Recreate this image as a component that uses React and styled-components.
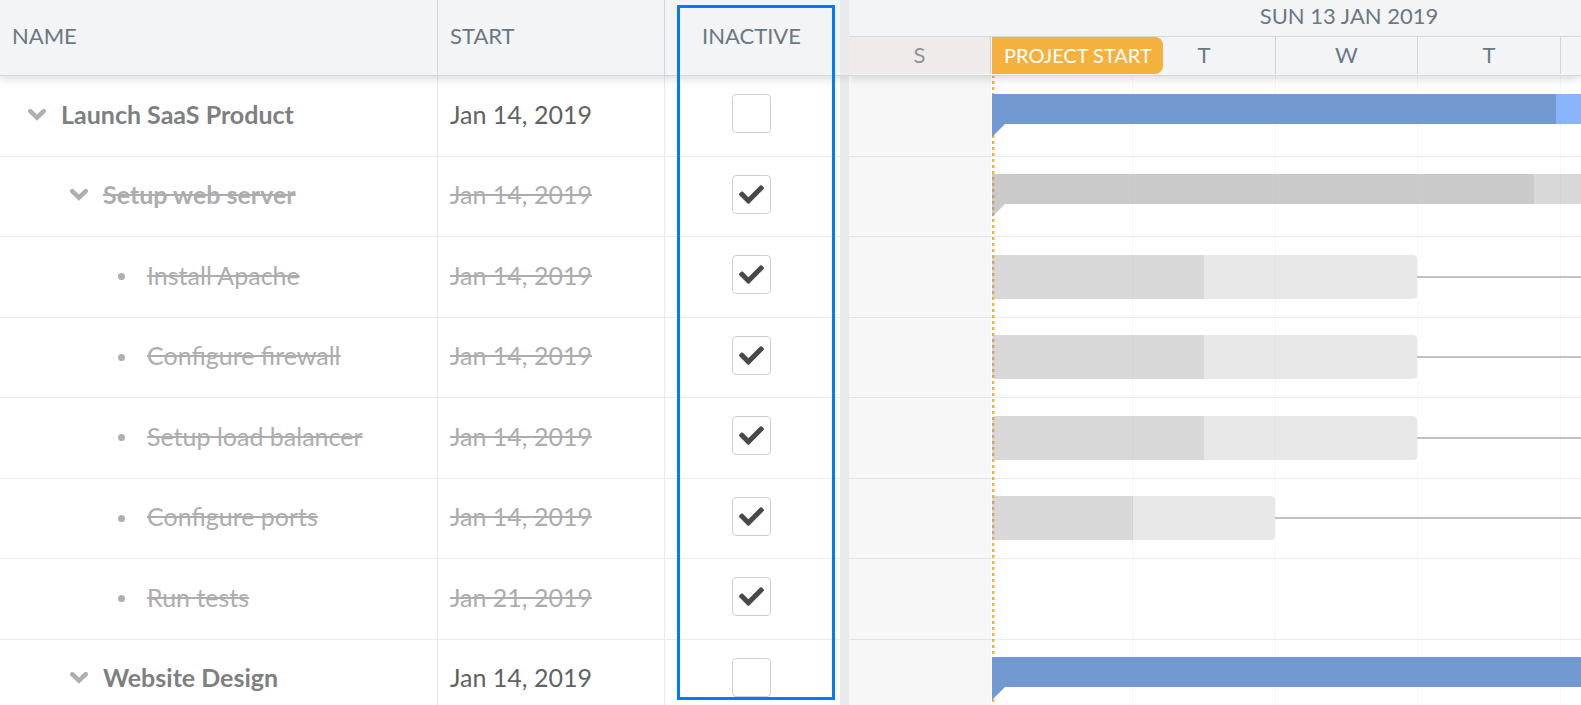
import React, { useState } from "react";
import styled, { createGlobalStyle, css } from "styled-components";
import { FaCheck } from "react-icons/fa";

const GlobalStyle = createGlobalStyle`
  *, *::before, *::after { box-sizing: border-box; }
  body {
    margin: 0;
    background: #fff;
    font-family: Lato, "Liberation Sans", sans-serif;
    font-size: 25px;
    line-height: 30px;
    color: #606263;
  }
`;

const HEADER_LINE = "#d5d8da";
const ROW_LINE = "#e9eaeb";

const Gantt = styled.main`
  display: flex;
  height: 100vh;
  overflow: hidden;
`;

const headerSurface = css`
  position: relative;
  z-index: 2;
  background: #f3f4f6;
  box-shadow: 0 2px 10px rgba(0, 0, 0, 0.16);
`;

const rowHeight = css`
  height: 81px;
  &:nth-child(even) { height: 80px; }
`;

const TreePanel = styled.section`
  position: relative;
  flex: none;
  overflow: hidden;
`;

const TreeTable = styled.table`
  table-layout: fixed;
  width: 840px;
  border-collapse: separate;
  border-spacing: 0;
`;

const NameColumn = styled.col`
  width: 438px;
`;

const StartColumn = styled.col`
  width: 227px;
`;

const HeadRow = styled.tr`
  ${headerSurface}
  height: 76px;
`;

const HeadCell = styled.th`
  padding: 0 12px 4px;
  border-right: 1px solid ${HEADER_LINE};
  border-bottom: 1px solid ${HEADER_LINE};
  color: #6b7883;
  font-size: 22px;
  font-weight: 400;
  text-align: ${(p) => (p.$center ? "center" : "left")};
  &:last-child { padding-right: 14px; border-right: 0; }
`;

const Row = styled.tr`
  ${rowHeight}
  color: ${(p) => (p.$inactive ? "#adadad" : "inherit")};
`;

const Cell = styled.td`
  padding: 0 12px 5px;
  border-right: 1px solid ${ROW_LINE};
  border-bottom: 1px solid ${ROW_LINE};
  text-decoration: ${(p) => (p.$struck ? "line-through" : "none")};
  &:last-child { padding-right: 14px; border-right: 0; }
`;

const TreeNode = styled.div`
  display: flex;
  align-items: center;
  gap: ${(p) => (p.$leaf ? 15 : 13)}px;
  padding-left: ${(p) => 14 + p.$depth * 42}px;
`;

const NodeName = styled.span`
  color: ${(p) => (p.$inactive ? "#adadad" : "#7d7f80")};
  font-weight: ${(p) => (p.$parent ? 700 : 400)};
  text-decoration: ${(p) => (p.$inactive ? "line-through" : "none")};
`;

const Expander = styled.button`
  display: flex;
  width: 22px;
  height: 22px;
  padding: 0;
  border: 0;
  background: none;
  color: #adafb0;
  cursor: pointer;
`;

const LeafMark = styled.span`
  display: flex;
  justify-content: center;
  width: 22px;
  padding-top: 4px;
  &::before {
    content: "";
    width: 7px;
    height: 7px;
    border-radius: 50%;
    background: #adafb0;
  }
`;

const Tick = styled.label`
  display: grid;
  width: 39px;
  margin: 0 auto;
  > * { grid-area: 1 / 1; place-self: center; }
  svg { z-index: 1; color: #464849; font-size: 25px; pointer-events: none; }
`;

const TickBox = styled.input`
  appearance: none;
  width: 39px;
  height: 39px;
  margin: 0;
  border: 1px solid #d0d1d2;
  border-radius: 4px;
  background: #fff;
`;

const ColumnHighlight = styled.div`
  position: absolute;
  z-index: 3;
  top: 5px;
  right: 5px;
  bottom: 5px;
  width: 158px;
  border: 3px solid #007bff;
  pointer-events: none;
`;

const Splitter = styled.div`
  flex: none;
  width: 9px;
  background: #e8eaec;
  &::before {
    content: "";
    display: block;
    height: 76px;
    border-bottom: 1px solid ${HEADER_LINE};
    box-shadow: 0 2px 10px rgba(0, 0, 0, 0.16);
  }
`;

const Timeline = styled.section`
  display: flex;
  flex-direction: column;
  flex: 1;
  min-width: 0;
  overflow: hidden;
`;

const TimeHeader = styled.header`
  ${headerSurface}
  flex: none;
  height: 76px;
  border-bottom: 1px solid ${HEADER_LINE};
  color: #6b7883;
  font-size: 22px;
`;

const WeekLabel = styled.div`
  width: 1000px;
  height: 37px;
  padding-top: 1px;
  border-bottom: 1px solid ${HEADER_LINE};
  text-align: center;
`;

const Days = styled.div`
  display: flex;
  height: 37px;
`;

const Day = styled.div`
  flex: none;
  width: ${(p) => p.$width}px;
  padding-top: 3px;
  border-right: 1px solid ${HEADER_LINE};
  background: ${(p) => (p.$weekend ? "#f0ebeb" : "none")};
  color: ${(p) => (p.$weekend ? "#909298" : "inherit")};
  text-align: center;
`;

const StartFlag = styled.div`
  position: absolute;
  top: 37px;
  left: 143px;
  height: 37px;
  padding: 3px 11px 0 12px;
  border-radius: 0 8px 8px 0;
  background: #f5b13d;
  color: #fff;
  font-size: 20px;
  white-space: nowrap;
`;

const TimeBody = styled.div`
  position: relative;
  flex: 1;
`;

const Backdrop = styled.div`
  position: absolute;
  inset: 0;
  display: flex;
`;

const DayStripe = styled.div`
  flex: none;
  width: ${(p) => p.$width}px;
  border-right: 1px solid #f7f7f8;
  background: ${(p) => (p.$weekend ? "#f7f7f7" : "none")};
`;

const StartLine = styled.div`
  position: absolute;
  top: 0;
  bottom: 0;
  left: 143px;
  width: 3px;
  background: repeating-linear-gradient(
    #f5b13d 0 2px, transparent 2px 5px, #f5b13d 5px 6px
  );
  mask-image: linear-gradient(90deg, #000 2px, rgba(0, 0, 0, 0.4) 2px);
`;

const Lanes = styled.div`
  position: relative;
`;

const Lane = styled.div`
  ${rowHeight}
  display: flex;
  align-items: flex-start;
  padding: 18px 0 0 143px;
  border-bottom: 1px solid rgba(0, 0, 0, 0.08);
  &:nth-child(even) { padding-top: 17px; }
`;

const summaryTones = {
  blue: ["#7299d2", "#89b4fa"],
  grey: ["rgba(150, 150, 150, 0.5)", "rgba(150, 150, 150, 0.37)"],
};

const SummaryBar = styled.div`
  flex: 1;
  height: 44px;
  background: ${(p) => {
    const [done, rest] = summaryTones[p.$tone];
    return `linear-gradient(90deg, ${done} ${p.$done}px, ${rest} ${p.$done}px)`;
  }};
  clip-path: polygon(0 0, 100% 0, 100% 30px, 13px 30px, 0 43px);
`;

const TaskBar = styled.div`
  flex: none;
  width: ${(p) => p.$width}px;
  height: 44px;
  border-radius: 4px;
  background: linear-gradient(
    90deg,
    rgba(150, 150, 150, 0.37) ${(p) => p.$done}px,
    rgba(150, 150, 150, 0.22) ${(p) => p.$done}px
  );
`;

const Link = styled.div`
  flex: 1;
  height: 2px;
  margin-top: 21px;
  background: #c1c1c1;
`;

const days = [
  { label: "S", width: 142, weekend: true },
  { label: "", width: 142 },
  { label: "T", width: 143 },
  { label: "W", width: 142 },
  { label: "T", width: 143 },
  { label: "", width: 142 },
];

const initialTasks = [
  { name: "Launch SaaS Product", start: "Jan 14, 2019", depth: 0, parent: true, tone: "blue", done: 564 },
  { name: "Setup web server", start: "Jan 14, 2019", depth: 1, parent: true, inactive: true, tone: "grey", done: 542 },
  { name: "Install Apache", start: "Jan 14, 2019", depth: 2, inactive: true, width: 425, done: 212 },
  { name: "Configure firewall", start: "Jan 14, 2019", depth: 2, inactive: true, width: 425, done: 212 },
  { name: "Setup load balancer", start: "Jan 14, 2019", depth: 2, inactive: true, width: 425, done: 212 },
  { name: "Configure ports", start: "Jan 14, 2019", depth: 2, inactive: true, width: 283, done: 141 },
  { name: "Run tests", start: "Jan 21, 2019", depth: 2, inactive: true },
  { name: "Website Design", start: "Jan 14, 2019", depth: 1, parent: true, tone: "blue", done: 900 },
];

function Chevron() {
  return (
    <svg width="22" height="22" viewBox="0 0 22 22" fill="none" aria-hidden="true">
      <path
        d="M4.2 8.1 L11 14.6 L17.8 8.1"
        stroke="currentColor"
        strokeWidth="4.6"
        strokeLinecap="round"
        strokeLinejoin="miter"
      />
    </svg>
  );
}

function TaskRow({ task, onToggle }) {
  return (
    <Row $inactive={task.inactive}>
      <Cell>
        <TreeNode $depth={task.depth} $leaf={!task.parent}>
          {task.parent ? (
            <Expander type="button" aria-label={`Collapse ${task.name}`}>
              <Chevron />
            </Expander>
          ) : (
            <LeafMark />
          )}
          <NodeName $parent={task.parent} $inactive={task.inactive}>{task.name}</NodeName>
        </TreeNode>
      </Cell>
      <Cell $struck={task.inactive}>{task.start}</Cell>
      <Cell>
        <Tick>
          <TickBox
            type="checkbox"
            aria-label={`${task.name} inactive`}
            checked={!!task.inactive}
            onChange={onToggle}
          />
          {task.inactive && <FaCheck />}
        </Tick>
      </Cell>
    </Row>
  );
}

function TaskLane({ task }) {
  return (
    <Lane>
      {task.parent && <SummaryBar $tone={task.tone} $done={task.done} />}
      {task.width && (
        <>
          <TaskBar $width={task.width} $done={task.done} />
          <Link />
        </>
      )}
    </Lane>
  );
}

export default function App() {
  const [tasks, setTasks] = useState(initialTasks);
  const toggle = (index) =>
    setTasks((list) => list.map((t, i) => (i === index ? { ...t, inactive: !t.inactive } : t)));

  return (
    <>
      <GlobalStyle />
      <Gantt>
        <TreePanel>
          <TreeTable>
            <colgroup>
              <NameColumn />
              <StartColumn />
              <col />
            </colgroup>
            <thead>
              <HeadRow>
                <HeadCell>NAME</HeadCell>
                <HeadCell>START</HeadCell>
                <HeadCell $center>INACTIVE</HeadCell>
              </HeadRow>
            </thead>
            <tbody>
              {tasks.map((task, i) => (
                <TaskRow key={task.name} task={task} onToggle={() => toggle(i)} />
              ))}
            </tbody>
          </TreeTable>
          <ColumnHighlight />
        </TreePanel>
        <Splitter />
        <Timeline>
          <TimeHeader>
            <WeekLabel>SUN 13 JAN 2019</WeekLabel>
            <Days>
              {days.map((day, i) => (
                <Day key={i} $width={day.width} $weekend={day.weekend}>
                  {day.label}
                </Day>
              ))}
            </Days>
            <StartFlag>PROJECT START</StartFlag>
          </TimeHeader>
          <TimeBody>
            <Backdrop>
              {days.map((day, i) => (
                <DayStripe key={i} $width={day.width} $weekend={day.weekend} />
              ))}
            </Backdrop>
            <StartLine />
            <Lanes>
              {tasks.map((task) => (
                <TaskLane key={task.name} task={task} />
              ))}
            </Lanes>
          </TimeBody>
        </Timeline>
      </Gantt>
    </>
  );
}
